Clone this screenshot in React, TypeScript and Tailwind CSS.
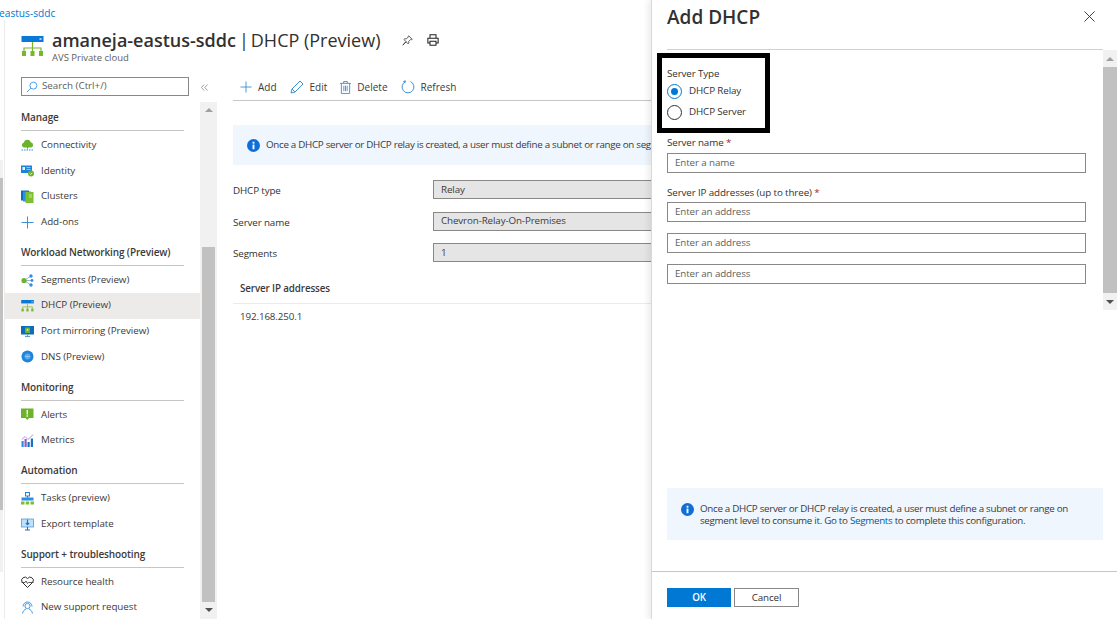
import type { ReactNode } from 'react';

function DhcpIcon({ className }: { className?: string }) {
  return (
    <svg viewBox="0 0 22 21" className={className}>
      <rect x="0" y="0" width="22" height="6" fill="#0a78d6" />
      <rect x="18" y="2" width="2" height="2" fill="#9fd0f5" />
      <path d="M11 6v9M2.5 15v-3h17v3" stroke="#76b82a" strokeWidth="1.2" fill="none" />
      <rect x="0.5" y="15" width="4" height="5" fill="#76b82a" />
      <rect x="9" y="15" width="4" height="5" fill="#76b82a" />
      <rect x="17.5" y="15" width="4" height="5" fill="#76b82a" />
    </svg>
  );
}

function Connectivity() {
  return (
    <svg viewBox="0 0 13 13" className="h-[13px] w-[13px]">
      <path d="M3 8.5a2.4 2.4 0 0 1-.3-4.7A3.7 3.7 0 0 1 9.8 3.3 2.7 2.7 0 0 1 10.3 8.5z" fill="#6cb22b" />
      <path d="M6.5 8v3M0.5 11h12" stroke="#2f8fe0" strokeWidth="1" strokeDasharray="1.5 1" fill="none" />
    </svg>
  );
}
function Identity() {
  return (
    <svg viewBox="0 0 13 13" className="h-[13px] w-[13px]">
      <rect x="0" y="1.5" width="11" height="7.5" fill="#1d84dc" />
      <rect x="1.5" y="3" width="2.5" height="3" fill="#e8f4fd" />
      <path d="M5.5 3.5h4M5.5 5.5h4" stroke="#a8d4f7" strokeWidth="0.8" />
      <circle cx="10" cy="9.5" r="3" fill="#6cb22b" />
      <path d="M8.6 9.5l1 1 1.8-1.8" stroke="#fff" strokeWidth="0.8" fill="none" />
    </svg>
  );
}
function Clusters() {
  return (
    <svg viewBox="0 0 13 13" className="h-[13px] w-[13px]">
      <rect x="0" y="0.5" width="8" height="10" fill="#0f6cbd" />
      <rect x="2" y="1.5" width="8" height="10" fill="#2f8fe0" />
      <rect x="4.5" y="2" width="8" height="11" fill="#7cc02f" />
      <path d="M8 5h3M8 7h3" stroke="#d7efb8" strokeWidth="0.8" />
    </svg>
  );
}
function AddOns() {
  return (
    <svg viewBox="0 0 13 13" className="h-[13px] w-[13px]">
      <path d="M6.5 0.5v12M0.5 6.5h12" stroke="#3f8fd6" strokeWidth="1" />
    </svg>
  );
}
function Segments() {
  return (
    <svg viewBox="0 0 13 13" className="h-[13px] w-[13px]">
      <path d="M3 6.5L10 2M3 6.5L10 11M3 6.5h8" stroke="#6b9ac4" strokeWidth="0.7" />
      <circle cx="3" cy="6.5" r="2.6" fill="#6cb22b" />
      <circle cx="10" cy="2" r="1.7" fill="#2f8fe0" />
      <circle cx="11" cy="6.5" r="1.4" fill="#2f8fe0" />
      <circle cx="10" cy="11" r="1.7" fill="#2f8fe0" />
    </svg>
  );
}
function PortMirroring() {
  return (
    <svg viewBox="0 0 13 13" className="h-[13px] w-[13px]">
      <rect x="0" y="1" width="13" height="8.5" fill="#0f6cbd" />
      <rect x="4" y="2.5" width="5" height="5.5" fill="#6cb22b" />
      <path d="M6.5 3.5l1.3 2H5.2z" fill="#e2f3cf" />
      <path d="M4 11.5h5" stroke="#5d9fd6" strokeWidth="1.2" />
      <path d="M6.5 9.5v2" stroke="#5d9fd6" strokeWidth="1" />
    </svg>
  );
}
function Dns() {
  return (
    <svg viewBox="0 0 13 13" className="h-[13px] w-[13px]">
      <circle cx="6.5" cy="6.5" r="6" fill="#1d84dc" />
      <circle cx="6.5" cy="6.5" r="3" fill="#5aa9ea" />
      <path d="M4.5 6.5h4" stroke="#d6ebfb" strokeWidth="0.8" strokeDasharray="1 0.6" />
    </svg>
  );
}
function Alerts() {
  return (
    <svg viewBox="0 0 13 13" className="h-[13px] w-[13px]">
      <rect x="0" y="0.5" width="12.5" height="9.5" fill="#6cb22b" />
      <path d="M4.5 10H8l-1.7 2z" fill="#6cb22b" />
      <path d="M6.25 2v4.5" stroke="#fff" strokeWidth="1.4" />
      <rect x="5.5" y="7.3" width="1.5" height="1.4" fill="#fff" />
    </svg>
  );
}
function Metrics() {
  return (
    <svg viewBox="0 0 13 13" className="h-[13px] w-[13px]">
      <rect x="0.5" y="7" width="2.2" height="6" fill="#2f8fe0" />
      <rect x="3.5" y="5" width="2.2" height="8" fill="#8661c5" />
      <rect x="6.5" y="8" width="2.2" height="5" fill="#1d6fc2" />
      <rect x="9.8" y="4.5" width="2.2" height="8.5" fill="#1d6fc2" />
      <path d="M0.8 5.5L4 2.5l3 3L12.3 0.5" stroke="#b388e0" strokeWidth="0.9" fill="none" />
    </svg>
  );
}
function Tasks() {
  return (
    <svg viewBox="0 0 13 13" className="h-[13px] w-[13px]">
      <rect x="4.5" y="0.5" width="4" height="3.5" fill="none" stroke="#1d84dc" strokeWidth="1" />
      <path d="M6.5 4v2" stroke="#1d84dc" strokeWidth="1" />
      <rect x="0.5" y="5.5" width="12" height="3" fill="#2f8fe0" />
      <rect x="0" y="9.5" width="3.5" height="3" fill="#7cc02f" />
      <rect x="4.7" y="9.5" width="3.5" height="3" fill="#7cc02f" />
      <rect x="9.5" y="9.5" width="3.5" height="3" fill="#7cc02f" />
    </svg>
  );
}
function ExportTemplate() {
  return (
    <svg viewBox="0 0 13 13" className="h-[13px] w-[13px]">
      <rect x="0.5" y="1" width="12" height="8" fill="#bfe0f8" stroke="#4b9fe0" strokeWidth="0.8" />
      <path d="M6.5 1.5v5M4.8 4.8l1.7 1.9 1.7-1.9" stroke="#1d6fc2" strokeWidth="1.1" fill="none" />
      <path d="M6.5 9v2.5M4 12h5" stroke="#1d6fc2" strokeWidth="1.1" />
    </svg>
  );
}
function ResourceHealth() {
  return (
    <svg viewBox="0 0 13 13" className="h-[13px] w-[13px]">
      <path d="M6.5 11.5L1.2 6.2A3 3 0 0 1 6.5 2.6 3 3 0 0 1 11.8 6.2z" fill="none" stroke="#323130" strokeWidth="1" />
      <path d="M0.5 6.5H4l1-1.5 1.5 2.5 1-1h5" fill="none" stroke="#323130" strokeWidth="0.8" />
    </svg>
  );
}
function NewSupport() {
  return (
    <svg viewBox="0 0 13 13" className="h-[13px] w-[13px]">
      <circle cx="6.5" cy="5" r="2.6" fill="none" stroke="#2f8fe0" strokeWidth="0.9" />
      <path d="M2 5.5a4.5 4.5 0 0 1 9 0" fill="none" stroke="#2f8fe0" strokeWidth="0.9" />
      <path d="M1.5 12.5c.5-2.5 2-4 3.5-4.5M11.5 12.5c-.5-2.5-2-4-3.5-4.5" fill="none" stroke="#2f8fe0" strokeWidth="0.9" />
    </svg>
  );
}

const sections: { title: string; items: { label: string; icon: ReactNode; active?: boolean }[] }[] = [
  {
    title: 'Manage',
    items: [
      { label: 'Connectivity', icon: <Connectivity /> },
      { label: 'Identity', icon: <Identity /> },
      { label: 'Clusters', icon: <Clusters /> },
      { label: 'Add-ons', icon: <AddOns /> },
    ],
  },
  {
    title: 'Workload Networking (Preview)',
    items: [
      { label: 'Segments (Preview)', icon: <Segments /> },
      { label: 'DHCP (Preview)', icon: <DhcpIcon className="h-[12px] w-[13px]" />, active: true },
      { label: 'Port mirroring (Preview)', icon: <PortMirroring /> },
      { label: 'DNS (Preview)', icon: <Dns /> },
    ],
  },
  {
    title: 'Monitoring',
    items: [
      { label: 'Alerts', icon: <Alerts /> },
      { label: 'Metrics', icon: <Metrics /> },
    ],
  },
  {
    title: 'Automation',
    items: [
      { label: 'Tasks (preview)', icon: <Tasks /> },
      { label: 'Export template', icon: <ExportTemplate /> },
    ],
  },
  {
    title: 'Support + troubleshooting',
    items: [
      { label: 'Resource health', icon: <ResourceHealth /> },
      { label: 'New support request', icon: <NewSupport /> },
    ],
  },
];

function InfoIcon() {
  return (
    <svg viewBox="0 0 14 14" className="h-[13px] w-[13px] shrink-0">
      <circle cx="7" cy="7" r="7" fill="#0f6fd6" />
      <rect x="6" y="6" width="2" height="5" fill="#fff" />
      <rect x="6" y="3" width="2" height="2" fill="#fff" />
    </svg>
  );
}

function Scrollbar({ className, thumbClass }: { className: string; thumbClass: string }) {
  return (
    <div className={`flex flex-col items-center bg-[#f1f1f1] ${className}`}>
      <div className="flex h-[17px] shrink-0 items-center justify-center">
        <div className="h-0 w-0 border-x-[4px] border-b-[4px] border-x-transparent border-b-[#a0a0a0]" />
      </div>
      <div className={`w-full ${thumbClass}`}>
        <div className="h-full w-full bg-[#c1c1c1]" />
      </div>
      <div className="mt-auto flex h-[17px] shrink-0 items-center justify-center">
        <div className="h-0 w-0 border-x-[4px] border-t-[4px] border-x-transparent border-t-[#505050]" />
      </div>
    </div>
  );
}

function Sidebar() {
  return (
    <aside className="flex w-[212px] shrink-0 flex-col">
      <div className="flex h-[34.2px] shrink-0 items-start pl-[16px] pt-[11px]">
        <div className="flex h-[19px] w-[168px] items-center border border-[#8a8886] pl-[4px] text-[9.8px] tracking-normal text-[#605e5c]">
          <svg viewBox="0 0 13 13" className="mr-[4px] h-[12px] w-[12px]">
            <circle cx="8" cy="5" r="3.8" fill="none" stroke="#2f8fe0" strokeWidth="0.9" />
            <path d="M5.2 7.8L1 12" stroke="#2f8fe0" strokeWidth="0.9" />
          </svg>
          Search (Ctrl+/)
        </div>
        <svg viewBox="0 0 7 7" className="ml-[12px] mt-[7px] h-[7px] w-[7px]">
          <path d="M3.2.5L.5 3.5l2.7 3M6.5.5L3.8 3.5l2.7 3" fill="none" stroke="#8a8886" strokeWidth="0.8" />
        </svg>
      </div>
      <div className="flex min-h-0 flex-1">
        <nav className="w-[195px] shrink-0">
          {sections.map((section) => (
            <div key={section.title}>
              <div className="mx-[16px] h-[30.8px] border-b border-[#c8c6c4] pt-[8.8px] text-[10px] font-semibold leading-[16px] text-[#3b3a39]">
                {section.title}
              </div>
              <div className="pt-[1.6px]">
                {section.items.map((item) => (
                  <div
                    key={item.label}
                    className={`flex h-[25.6px] items-center pl-[16px] ${item.active ? 'bg-[#edebe9]' : ''}`}
                  >
                    <span className="flex w-[20px] shrink-0 items-center">{item.icon}</span>
                    <span className="text-[9.8px] tracking-[-0.05px] text-[#3b3a39]">{item.label}</span>
                  </div>
                ))}
              </div>
            </div>
          ))}
        </nav>
        <Scrollbar className="mt-[1.8px] h-[517px] w-[17px] shrink-0 px-[2px]" thumbClass="mt-[128px] h-[356px]" />
      </div>
    </aside>
  );
}

function ToolButton({ icon, label }: { icon: ReactNode; label: string }) {
  return (
    <div className="flex items-center gap-[6px] text-[10px] tracking-normal text-[#3b3a39]">
      {icon}
      {label}
    </div>
  );
}

function ReadonlyRow({ label, value }: { label: string; value: string }) {
  return (
    <div className="flex h-[31.5px] items-start">
      <span className="mt-[3px] w-[200px] shrink-0 text-[9.8px] leading-[16px] text-[#323130]">{label}</span>
      <div className="flex h-[19px] w-[300px] shrink-0 items-center border border-[#8a8886] bg-[#e5e5e5] pl-[7px] pt-[1px] text-[9.8px] text-[#3b3a39]">
        {value}
      </div>
    </div>
  );
}

function MainContent() {
  return (
    <main className="min-w-0 flex-1 overflow-hidden pl-[16px] whitespace-nowrap">
      <div className="flex h-[35px] items-center gap-[13px] border-b border-[#c8c6c4] pl-[7px] pt-[8px]">
        <ToolButton
          label="Add"
          icon={
            <svg viewBox="0 0 13 13" className="h-[12px] w-[12px]">
              <path d="M6.5 0.5v12M0.5 6.5h12" stroke="#3f8fd6" strokeWidth="1" />
            </svg>
          }
        />
        <ToolButton
          label="Edit"
          icon={
            <svg viewBox="0 0 14 14" className="h-[14px] w-[14px]">
              <path d="M1 13l1-4L10 1l3 3-8 8z" fill="none" stroke="#3f8fd6" strokeWidth="1" />
              <path d="M2 9l3 3" stroke="#3f8fd6" strokeWidth="1" />
            </svg>
          }
        />
        <ToolButton
          label="Delete"
          icon={
            <svg viewBox="0 0 12 14" className="h-[13px] w-[11px]">
              <path d="M0 2.5h12M4 2.5v-2h4v2" fill="none" stroke="#3f8fd6" strokeWidth="1" />
              <path d="M1.5 2.5v11h9v-11M4.2 5v6M6 5v6M7.8 5v6" fill="none" stroke="#3f8fd6" strokeWidth="1" />
            </svg>
          }
        />
        <ToolButton
          label="Refresh"
          icon={
            <svg viewBox="0 0 14 14" className="h-[14px] w-[14px]">
              <path d="M9.5 1.6A5.9 5.9 0 1 1 4.5 1.6" fill="none" stroke="#3f8fd6" strokeWidth="1" />
              <path d="M4.5 0v3L2 1.5z" fill="#3f8fd6" />
            </svg>
          }
        />
      </div>
      <div className="mt-[24px] flex h-[40px] items-center gap-[6px] bg-[#eff6fe] pl-[14px] text-[9.8px] tracking-[-0.3px] text-[#3b3a39]">
        <InfoIcon />
        Once a DHCP server or DHCP relay is created, a user must define a subnet or range on segment level to consume it.
      </div>
      <div className="mt-[15px]">
        <ReadonlyRow label="DHCP type" value="Relay" />
        <ReadonlyRow label="Server name" value="Chevron-Relay-On-Premises" />
        <ReadonlyRow label="Segments" value="1" />
      </div>
      <div className="mt-[6.5px] flex h-[23px] items-center border-b border-[#edebe9] pb-[6px] pl-[7px] text-[9.8px] font-semibold text-[#3b3a39]">
        Server IP addresses
      </div>
      <div className="pl-[7px] pt-[5px] text-[9.8px] leading-[16px] text-[#3b3a39]">192.168.250.1</div>
    </main>
  );
}

function TextField({ placeholder }: { placeholder: string }) {
  return (
    <div className="flex h-[20px] w-[419px] items-center border border-[#8a8886] pl-[7px] text-[9.8px] text-[#605e5c]">
      {placeholder}
    </div>
  );
}

function Radio({ label, checked }: { label: string; checked?: boolean }) {
  return (
    <div className="flex h-[21px] items-center gap-[7px] text-[9.8px] text-[#323130]">
      <span
        className={`flex h-[15px] w-[15px] shrink-0 items-center justify-center rounded-full border ${checked ? 'border-[#0078d4]' : 'border-[#323130]'}`}
      >
        {checked && <span className="h-[7px] w-[7px] rounded-full bg-[#0078d4]" />}
      </span>
      {label}
    </div>
  );
}

function AddDhcpPanel() {
  return (
    <section className="relative flex h-[619px] w-[466px] shrink-0 flex-col border-l border-[#d8d8d8] bg-white shadow-[-3px_0_6px_rgba(0,0,0,0.08)]">
      <header className="flex h-[50px] shrink-0 items-start pl-[15px]">
        <div className="flex h-[50px] w-[436px] items-start justify-between border-b border-[#d2d0ce] pt-[4px]">
          <h2 className="text-[19px] leading-[26px] font-semibold tracking-normal text-[#323130]">Add DHCP</h2>
          <svg viewBox="0 0 12 12" className="mr-[8px] mt-[7px] h-[11px] w-[11px]">
            <path d="M.5.5l11 11M11.5.5l-11 11" stroke="#323130" strokeWidth="1" />
          </svg>
        </div>
      </header>
      <div className="flex h-[260px] shrink-0">
        <div className="w-[451px] shrink-0 pl-[15px] pt-[3px]">
          <div className="-ml-[10px] h-[80px] w-[113px] border-[5px] border-black pl-[5px] pt-[8px]">
            <div className="text-[9.8px] leading-[15px] text-[#323130]">Server Type</div>
            <Radio label="DHCP Relay" checked />
            <Radio label="DHCP Server" />
          </div>
          <div className="mt-[2px] h-[18px] text-[9.8px] leading-[16px] text-[#323130]">
            Server name <span className="text-[#a4262c]">*</span>
          </div>
          <TextField placeholder="Enter a name" />
          <div className="mt-[12px] h-[17px] text-[9.8px] leading-[16px] text-[#323130]">
            Server IP addresses (up to three) <span className="text-[#a4262c]">*</span>
          </div>
          <div className="flex flex-col gap-[11px]">
            <TextField placeholder="Enter an address" />
            <TextField placeholder="Enter an address" />
            <TextField placeholder="Enter an address" />
          </div>
        </div>
        <Scrollbar className="h-[260px] w-[14px] shrink-0" thumbClass="h-[226px]" />
      </div>
      <div className="flex-1 pl-[15px] pt-[178px]">
        <div className="flex h-[52px] w-[436px] items-start gap-[6px] bg-[#eff6fe] pl-[14px] pt-[15px] text-[9.8px] leading-[11.5px] tracking-[-0.3px] text-[#3b3a39]">
          <InfoIcon />
          <p className="w-[380px]">
            Once a DHCP server or DHCP relay is created, a user must define a subnet or range on segment level to consume it. Go to <span className="text-[#005a9e]">Segments</span> to complete this configuration.
          </p>
        </div>
      </div>
      <footer className="flex h-[48px] shrink-0 items-start gap-[3px] border-t border-[#c8c6c4] pl-[15px] pt-[16px]">
        <button className="h-[19px] w-[64px] bg-[#0078d4] text-[9.8px] font-semibold leading-none text-white">OK</button>
        <button className="h-[19px] w-[65px] border border-[#8a8886] bg-white text-[9.8px] leading-none text-[#323130]">Cancel</button>
      </footer>
    </section>
  );
}

export default function App() {
  return (
    <div className="flex h-[619px] w-[1117px] overflow-hidden bg-white font-['Open_Sans',sans-serif] tracking-[-0.12px]">
      <div className="flex w-[651px] shrink-0 flex-col">
        <div className="-ml-px h-[20px] shrink-0 pt-[5px] text-[10.2px] leading-[16px] tracking-normal text-[#0078d4]">eastus-sddc</div>
        <div className="flex min-h-0 flex-1">
          <div className="w-[5px] shrink-0 border-r border-[#ececec] pt-[140px]">
            <div className="h-[412px] w-[3px] bg-[#f1f1f1] pt-[18px]">
              <div className="h-[332px] bg-[#c1c1c1]" />
            </div>
          </div>
          <div className="flex min-w-0 flex-1 flex-col">
            <div className="flex h-[46px] shrink-0 items-start pl-[16px] pt-[13px]">
              <DhcpIcon className="mr-[8px] mt-[3px] h-[21px] w-[23px]" />
              <div className="tracking-normal">
                <div className="flex items-center text-[18px] leading-[14px] text-[#323130]">
                  <span className="font-semibold">amaneja-eastus-sddc</span>
                  <span className="ml-[3px]">|</span>
                  <span className="ml-[2px]">DHCP (Preview)</span>
                  <svg viewBox="0 0 14 14" className="ml-[21px] h-[11px] w-[11px]">
                    <path d="M8.5 1L13 5.5l-1 .5-1-.3L8.5 8.2l.2 2-1 1L5.2 8.7 1 13l4-4.7L2.5 5.8l1-1 2 .2L8 2.5 7.8 1.5z" fill="none" stroke="#323130" strokeWidth="1" />
                  </svg>
                  <svg viewBox="0 0 14 14" className="ml-[14px] h-[12px] w-[12px]">
                    <path d="M3.5 5V1h7v4M3.5 10.500H1V5h12v5.500h-2.500M3.500 8.500h7V13h-7z" fill="none" stroke="#201f1e" strokeWidth="1.2" />
                  </svg>
                </div>
                <div className="mt-[4px] text-[9.5px] leading-[14px] text-[#605e5c]">AVS Private cloud</div>
              </div>
            </div>
            <div className="flex min-h-0 flex-1">
              <Sidebar />
              <MainContent />
            </div>
          </div>
        </div>
      </div>
      <AddDhcpPanel />
    </div>
  );
}
